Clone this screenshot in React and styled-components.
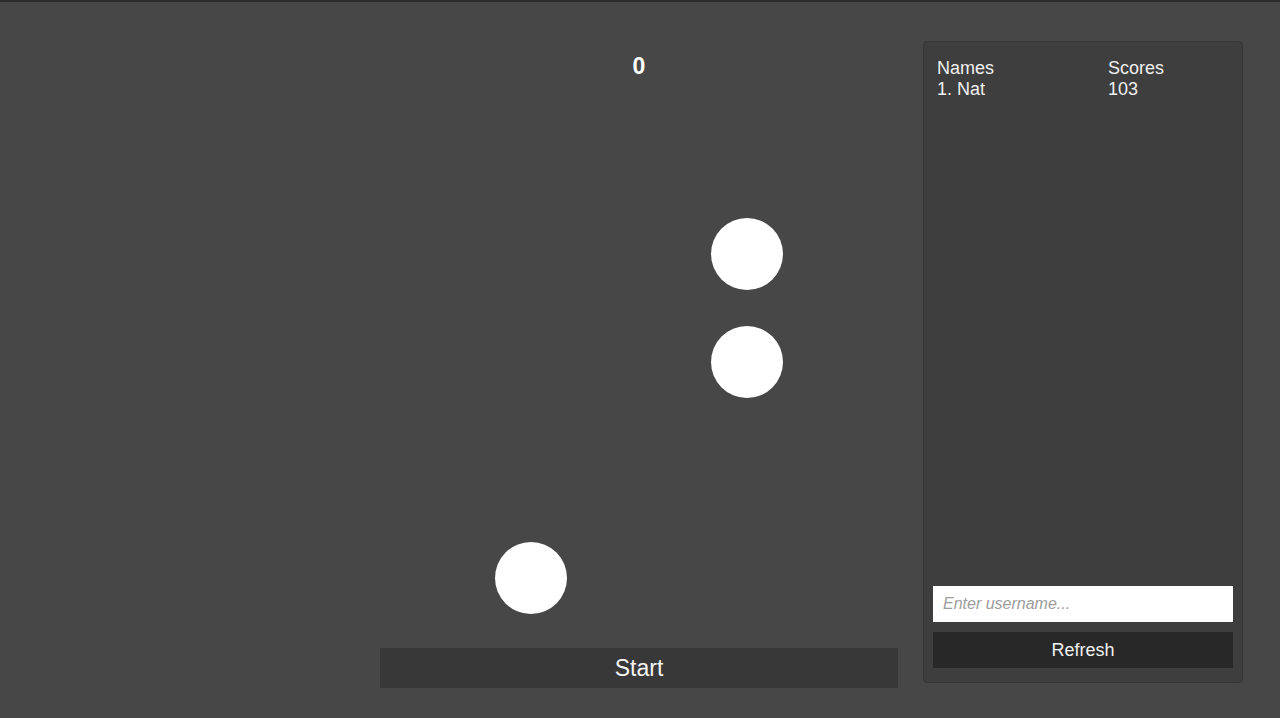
import React from 'react';
import styled, { createGlobalStyle } from 'styled-components';

const GlobalStyle = createGlobalStyle`
  html, body {
    margin: 0;
    padding: 0;
    background: #474747;
    font-family: "Liberation Sans", Arial, sans-serif;
  }
`;

const balls = [
  { id: 1, x: 331, y: 129 },
  { id: 2, x: 331, y: 237 },
  { id: 3, x: 115, y: 453 },
];

const scores = [{ name: 'Nat', score: 103 }];

export default function App() {
  return (
    <>
      <GlobalStyle />
      <Page>
        <GameColumn>
          <Score>0</Score>
          <Canvas>
            {balls.map((b) => (
              <Ball key={b.id} $x={b.x} $y={b.y} />
            ))}
          </Canvas>
          <StartButton>Start</StartButton>
        </GameColumn>

        <Panel>
          <Board>
            <Cell>Names</Cell>
            <Cell>Scores</Cell>
            {scores.map((s, i) => (
              <React.Fragment key={s.name}>
                <Cell>{i + 1}. {s.name}</Cell>
                <Cell>{s.score}</Cell>
              </React.Fragment>
            ))}
          </Board>
          <Controls>
            <NameInput placeholder="Enter username..." />
            <RefreshButton>Refresh</RefreshButton>
          </Controls>
        </Panel>
      </Page>
    </>
  );
}

// 전체 화면
const Page = styled.div`
  box-sizing: border-box;
  height: 718px;
  border-top: 2px solid #2b2b2b;
  padding: 39px 37px 0 380px;
  display: flex;
  align-items: flex-start;
  gap: 25px;
`;

// 게임 영역
const GameColumn = styled.div`
  width: 518px;
  height: 647px;
  display: flex;
  flex-direction: column;
`;

const Score = styled.div`
  height: 50px;
  line-height: 50px;
  text-align: center;
  color: #ffffff;
  font-size: 23px;
  font-weight: 700;
`;

const Canvas = styled.div`
  position: relative;
  flex: 1;
`;

const Ball = styled.div`
  position: absolute;
  left: ${(p) => p.$x}px;
  top: ${(p) => p.$y - 2}px;
  width: 72px;
  height: 72px;
  border-radius: 50%;
  background: #ffffff;
`;

const StartButton = styled.button`
  height: 40px;
  border: none;
  background: #383838;
  color: #f4f4f4;
  font-family: inherit;
  font-size: 23px;
  padding: 0;
`;

// 순위표
const Panel = styled.div`
  box-sizing: border-box;
  width: 320px;
  height: 642px;
  background: #3e3e3e;
  border: 1px solid #363636;
  border-radius: 4px;
  padding: 16px 9px 14px;
  display: flex;
  flex-direction: column;
  justify-content: space-between;
`;

const Board = styled.div`
  display: grid;
  grid-template-columns: 171px 1fr;
  padding-left: 4px;
`;

const Cell = styled.div`
  color: #f0f0f0;
  font-size: 18px;
  line-height: 21px;
`;

const Controls = styled.div`
  display: flex;
  flex-direction: column;
  gap: 10px;
`;

const NameInput = styled.input`
  box-sizing: border-box;
  height: 36px;
  border: none;
  outline: none;
  background: #ffffff;
  padding: 0 10px;
  font-family: inherit;
  font-size: 16px;
  color: #333;

  &::placeholder {
    color: #9c9c9c;
    font-style: italic;
  }
`;

const RefreshButton = styled.button`
  height: 36px;
  border: none;
  background: #282828;
  color: #f0f0f0;
  font-family: inherit;
  font-size: 18px;
  padding: 1px 0 0;
`;
